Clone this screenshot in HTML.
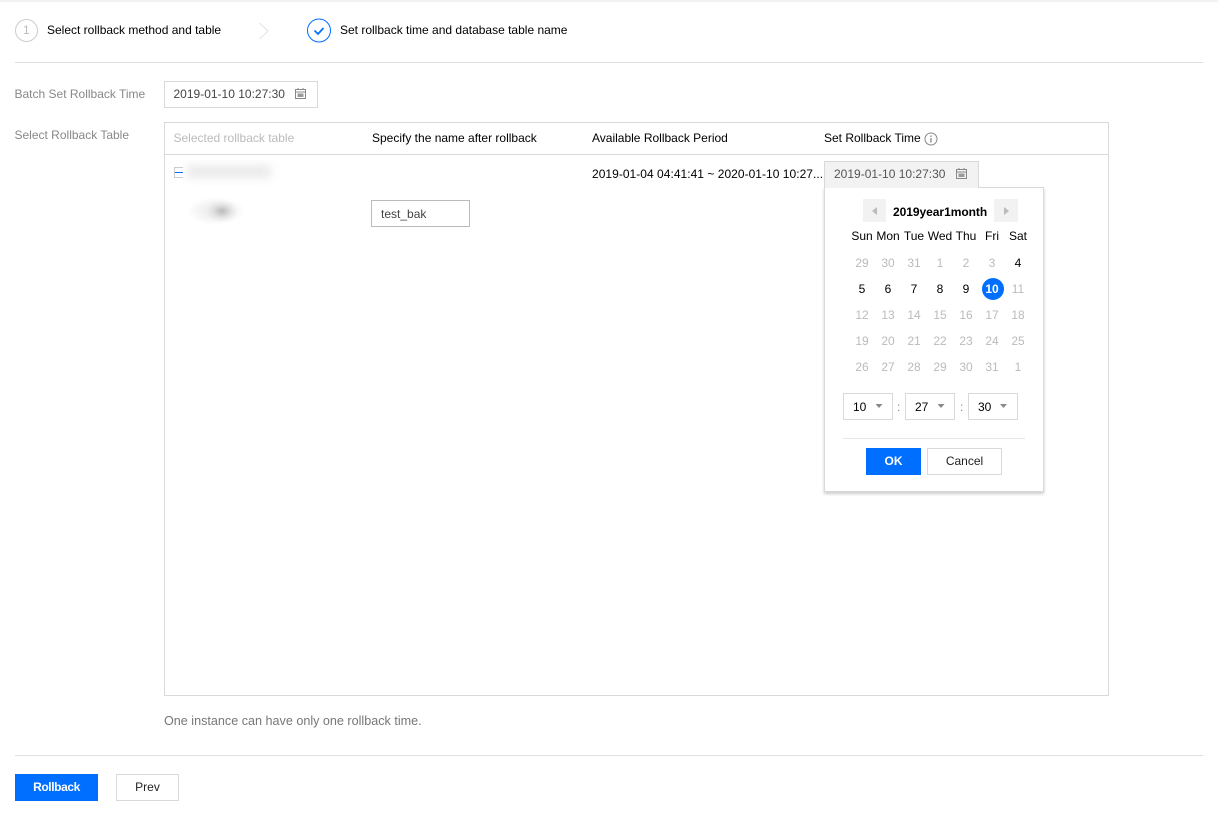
<!DOCTYPE html>
<html><head><meta charset="utf-8">
<style>
html,body{margin:0;padding:0;background:#fff}
#p{position:relative;width:1218px;height:815px;overflow:hidden;background:#fff;font-family:"Liberation Sans",sans-serif;font-size:12px;color:#000}
#p *{box-sizing:border-box}
.a{position:absolute;white-space:nowrap}
.t{position:absolute;white-space:nowrap;line-height:14px}
.g{color:#888}
.bd{position:absolute;border:1px solid #d9d9d9;background:#fff}
.hl{position:absolute;height:1px;background:#dfdfdf}
.d{position:absolute;width:26px;text-align:center;line-height:14px}
.m{color:#bbb}
.tri{position:absolute;width:7px;height:4px;background:#888;clip-path:polygon(0 0,100% 0,50% 100%)}
</style></head><body><div id="p">
<div class="a" style="left:0;top:0;width:1218px;height:2px;background:#f2f2f2"></div>

<svg class="a" style="left:14px;top:18px" width="26" height="26"><circle cx="12.500" cy="12.500" r="11" fill="none" stroke="#ccc" stroke-width="1"/></svg>
<div class="t" style="left:23px;top:23px;color:#bbb">1</div>
<div class="t" style="left:47px;top:23px">Select rollback method and table</div>
<svg class="a" style="left:256px;top:22px" width="16" height="20"><path d="M3.500 1L12 9L3.500 17" fill="none" stroke="#e2e2e2" stroke-width="1"/></svg>
<svg class="a" style="left:306px;top:18px" width="26" height="26"><circle cx="13" cy="12.500" r="11.500" fill="none" stroke="#006eff" stroke-width="1"/><path d="M8.500 12.500L12 16L17.500 10" fill="none" stroke="#006eff" stroke-width="1.700"/></svg>
<div class="t" style="left:340px;top:23px">Set rollback time and database table name</div>
<div class="hl" style="left:15px;top:62px;width:1188px"></div>

<div class="t g" style="left:14.500px;top:87px">Batch Set Rollback Time</div>
<div class="bd" style="left:164px;top:81px;width:154px;height:27px"></div>
<div class="t" style="left:173.500px;top:87px;color:#444">2019-01-10 10:27:30</div>
<svg class="a" style="left:295px;top:88px" width="12" height="12"><path d="M.5 1.500h10v9h-10zM.5 4h10" fill="none" stroke="#888"/><path d="M3 0v2M8 0v2" stroke="#888"/><rect x="2.500" y="5.500" width="6" height="3.500" fill="#999"/></svg>

<div class="t g" style="left:14.500px;top:128px">Select Rollback Table</div>
<div class="bd" style="left:164px;top:122px;width:945px;height:574px"></div>
<div class="hl" style="left:165px;top:154px;width:943px;background:#d9d9d9"></div>
<div class="t" style="left:173.500px;top:131px;color:#bbb">Selected rollback table</div>
<div class="t" style="left:372px;top:131px">Specify the name after rollback</div>
<div class="t" style="left:592px;top:131px">Available Rollback Period</div>
<div class="t" style="left:824px;top:131px">Set Rollback Time</div>
<svg class="a" style="left:924px;top:132px" width="14" height="14"><circle cx="7" cy="7" r="6" fill="none" stroke="#888"/><path d="M7 6v4.500M7 3.500v1.500" stroke="#888" stroke-width="1.300"/></svg>

<div class="a" style="left:174px;top:167px;width:10px;height:11px;border:1px solid #ccc"></div>
<div class="a" style="left:175px;top:172px;width:8px;height:1px;background:#006eff"></div>
<div class="a" style="left:183px;top:160px;width:100px;height:30px;overflow:hidden;background:#fff"><div class="a" style="left:4px;top:6px;width:84px;height:11px;background:#e6e6e6;filter:blur(5px)"></div></div>
<div class="a" style="left:187px;top:197px;width:60px;height:30px;background:radial-gradient(ellipse 16px 11px at 35px 14px,rgba(170,170,170,.75) 0%,rgba(200,200,200,.3) 60%,rgba(255,255,255,0) 100%),radial-gradient(ellipse 29px 14px at 29px 14px,#ececec 0%,#f2f2f2 50%,#fff 100%)"></div>
<div class="bd" style="left:371px;top:200px;width:99px;height:27px;border-color:#bbb"></div>
<div class="t" style="left:381px;top:207px;color:#444">test_bak</div>
<div class="t" style="left:592px;top:167px;letter-spacing:.03px">2019-01-04 04:41:41 ~ 2020-01-10 10:27...</div>

<div class="a" style="left:824px;top:161px;width:155px;height:27px;background:#f2f2f2;border:1px solid #d9d9d9"></div>
<div class="t" style="left:834px;top:167px;color:#555">2019-01-10 10:27:30</div>
<svg class="a" style="left:956px;top:168px" width="12" height="12"><path d="M.5 1.500h10v9h-10zM.5 4h10" fill="none" stroke="#888"/><path d="M3 0v2M8 0v2" stroke="#888"/><rect x="2.500" y="5.500" width="6" height="3.500" fill="#999"/></svg>

<div class="a" style="left:824px;top:187px;width:220px;height:305px;background:#fff;border:1px solid #d9d9d9;box-shadow:0 2px 3px rgba(0,0,0,.2)"></div>
<div class="a" style="left:825px;top:186px;width:153px;height:2px;background:#f2f2f2"></div>
<div class="a" style="left:863px;top:199px;width:23px;height:23px;background:#f2f2f2"></div>
<div class="a" style="left:994px;top:199px;width:24px;height:23px;background:#f2f2f2"></div>
<svg class="a" style="left:871px;top:206px" width="8" height="10"><path d="M6 1v8L1 5z" fill="#bbb"/></svg>
<svg class="a" style="left:1002px;top:206px" width="8" height="10"><path d="M2 1v8l5-4z" fill="#bbb"/></svg>
<div class="t" style="left:893px;top:205px;font-weight:bold;letter-spacing:-.04px">2019year1month</div>

<div class="d" style="left:849px;top:229px">Sun</div><div class="d" style="left:875px;top:229px">Mon</div><div class="d" style="left:901px;top:229px">Tue</div><div class="d" style="left:927px;top:229px">Wed</div><div class="d" style="left:953px;top:229px">Thu</div><div class="d" style="left:979px;top:229px">Fri</div><div class="d" style="left:1005px;top:229px">Sat</div>

<div class="d m" style="left:849px;top:256px">29</div><div class="d m" style="left:875px;top:256px">30</div><div class="d m" style="left:901px;top:256px">31</div><div class="d m" style="left:927px;top:256px">1</div><div class="d m" style="left:953px;top:256px">2</div><div class="d m" style="left:979px;top:256px">3</div><div class="d" style="left:1005px;top:256px">4</div>
<div class="d" style="left:849px;top:282px">5</div><div class="d" style="left:875px;top:282px">6</div><div class="d" style="left:901px;top:282px">7</div><div class="d" style="left:927px;top:282px">8</div><div class="d" style="left:953px;top:282px">9</div>
<div class="a" style="left:982px;top:278px;width:22px;height:22px;border-radius:50%;background:#006eff"></div>
<div class="d" style="left:979px;top:282px;color:#fff;font-weight:bold">10</div><div class="d m" style="left:1005px;top:282px">11</div>
<div class="d m" style="left:849px;top:308px">12</div><div class="d m" style="left:875px;top:308px">13</div><div class="d m" style="left:901px;top:308px">14</div><div class="d m" style="left:927px;top:308px">15</div><div class="d m" style="left:953px;top:308px">16</div><div class="d m" style="left:979px;top:308px">17</div><div class="d m" style="left:1005px;top:308px">18</div>
<div class="d m" style="left:849px;top:334px">19</div><div class="d m" style="left:875px;top:334px">20</div><div class="d m" style="left:901px;top:334px">21</div><div class="d m" style="left:927px;top:334px">22</div><div class="d m" style="left:953px;top:334px">23</div><div class="d m" style="left:979px;top:334px">24</div><div class="d m" style="left:1005px;top:334px">25</div>
<div class="d m" style="left:849px;top:360px">26</div><div class="d m" style="left:875px;top:360px">27</div><div class="d m" style="left:901px;top:360px">28</div><div class="d m" style="left:927px;top:360px">29</div><div class="d m" style="left:953px;top:360px">30</div><div class="d m" style="left:979px;top:360px">31</div><div class="d m" style="left:1005px;top:360px">1</div>

<div class="bd" style="left:843px;top:393px;width:50px;height:27px"></div>
<div class="t" style="left:853px;top:400px">10</div><div class="tri" style="left:875.500px;top:404px"></div>
<div class="t g" style="left:897px;top:400px">:</div>
<div class="bd" style="left:905px;top:393px;width:50px;height:27px"></div>
<div class="t" style="left:915px;top:400px">27</div><div class="tri" style="left:937.500px;top:404px"></div>
<div class="t g" style="left:960px;top:400px">:</div>
<div class="bd" style="left:968px;top:393px;width:50px;height:27px"></div>
<div class="t" style="left:978px;top:400px">30</div><div class="tri" style="left:1000px;top:404px"></div>
<div class="hl" style="left:843px;top:438px;width:182px;background:#e5e5e5"></div>
<div class="a" style="left:866px;top:448px;width:55px;height:27px;background:#006eff;color:#fff;font-weight:bold;text-align:center;line-height:26px">OK</div>
<div class="bd" style="left:927px;top:448px;width:75px;height:27px;text-align:center;line-height:25px;color:#222">Cancel</div>

<div class="t g" style="left:164px;top:714px;color:#777;font-size:12.600px">One instance can have only one rollback time.</div>
<div class="hl" style="left:15px;top:755px;width:1188px"></div>
<div class="a" style="left:15px;top:774px;width:83px;height:27px;background:#006eff;color:#fff;font-weight:bold;text-align:center;line-height:27px;letter-spacing:-.4px">Rollback</div>
<div class="bd" style="left:116px;top:774px;width:63px;height:27px;text-align:center;line-height:25px;color:#222">Prev</div>
</div></body></html>
